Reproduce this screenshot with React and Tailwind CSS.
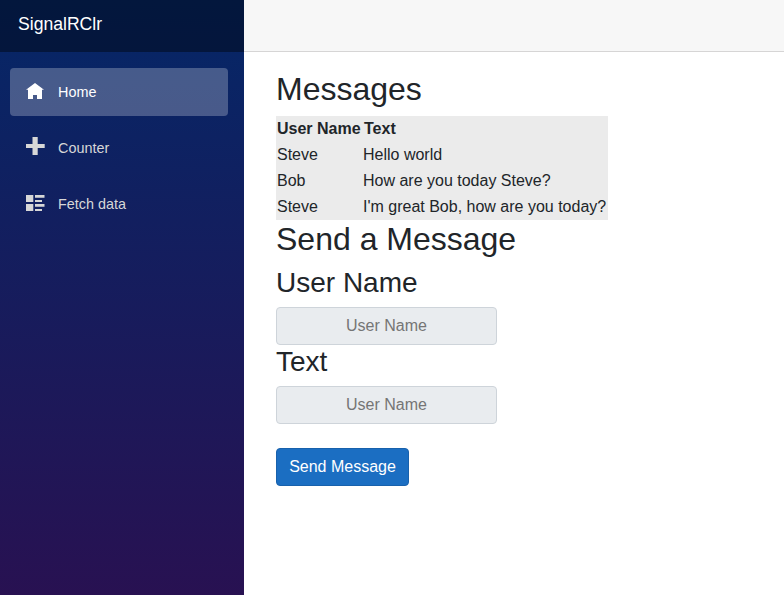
const messages = [
  { user: 'Steve', text: 'Hello world' },
  { user: 'Bob', text: 'How are you today Steve?' },
  { user: 'Steve', text: "I'm great Bob, how are you today?" },
];

function HomeIcon() {
  return (
    <svg width="18" height="16" viewBox="0 0 18 16" fill="currentColor">
      <path d="M9 0L0 6.8h2V16h5v-4h4v4h5V6.8h2z" />
    </svg>
  );
}

function PlusIcon() {
  return (
    <svg className="mb-0.5" width="19" height="18" viewBox="0 0 19 18" fill="currentColor">
      <path d="M6.5 0v7H0v4h6.5v7h5.2v-7H18.7V7h-7V0z" />
    </svg>
  );
}

function ListIcon() {
  return (
    <svg width="19" height="16" viewBox="0 0 19 16" fill="currentColor">
      <path d="M0 0h7.3v7H0zM9 0h9.5v2.7H9zM9 5h7v2H9zM0 9h7.3v7H0zM9 9h9.5v2.7H9zM9 14h7v2H9z" />
    </svg>
  );
}

function NavItem({ icon, label, active }) {
  return (
    <a
      className={
        active
          ? 'flex h-12 items-center rounded bg-white/25 pl-4 text-white'
          : 'flex h-12 items-center rounded pl-4 text-[#d7d7d7]'
      }
    >
      <span className="mb-0.5 w-8">{icon}</span>
      <span className="pt-0.5 text-[14.4px]">{label}</span>
    </a>
  );
}

function Field({ label }) {
  return (
    <>
      <h3 className="mb-2 text-[28px] leading-[33px]">{label}</h3>
      <input
        placeholder="User Name"
        className="block h-[38px] w-[221px] rounded border border-[#ced4da] bg-[#e9ecef] px-3 text-center text-base placeholder:text-[#757575]"
      />
    </>
  );
}

export default function App() {
  return (
    <div className="flex h-screen overflow-hidden bg-white font-['Liberation_Sans',Arial,sans-serif] text-[#212529]">
      <aside className="w-[244px] shrink-0 bg-[linear-gradient(180deg,#052767_0px,#3a0647_900px)]">
        <div className="flex h-[52px] items-center bg-black/40 pb-1 pl-[18px] text-[17.6px] text-white">
          SignalRClr
        </div>
        <nav className="flex flex-col gap-2 pt-4 pr-4 pl-2.5">
          <NavItem icon={<HomeIcon />} label="Home" active />
          <NavItem icon={<PlusIcon />} label="Counter" />
          <NavItem icon={<ListIcon />} label="Fetch data" />
        </nav>
      </aside>
      <div className="min-w-0 flex-1">
        <header className="h-[52px] border-b border-[#d6d5d5] bg-[#f7f7f7]" />
        <main className="flex flex-col items-start pt-[18px] pl-8">
          <h2 className="mb-2 text-[32px] leading-[38px]">Messages</h2>
          <table className="w-[332px] table-fixed border-collapse bg-[#ebebeb] text-base">
            <thead>
              <tr>
                <th className="w-[86px] p-px text-left whitespace-nowrap">User Name</th>
                <th className="py-px pl-0.5 text-left">Text</th>
              </tr>
            </thead>
            <tbody>
              {messages.map((message, index) => (
                <tr key={index}>
                  <td className="p-px">{message.user}</td>
                  <td className="py-px pl-px whitespace-nowrap">{message.text}</td>
                </tr>
              ))}
            </tbody>
          </table>
          <h2 className="mb-2 text-[32px] leading-[38px]">Send a Message</h2>
          <Field label="User Name" />
          <Field label="Text" />
          <button className="mt-6 h-[38px] w-[133px] rounded border border-[#1861ac] bg-[#1b6ec2] text-base text-white">
            Send Message
          </button>
        </main>
      </div>
    </div>
  );
}
